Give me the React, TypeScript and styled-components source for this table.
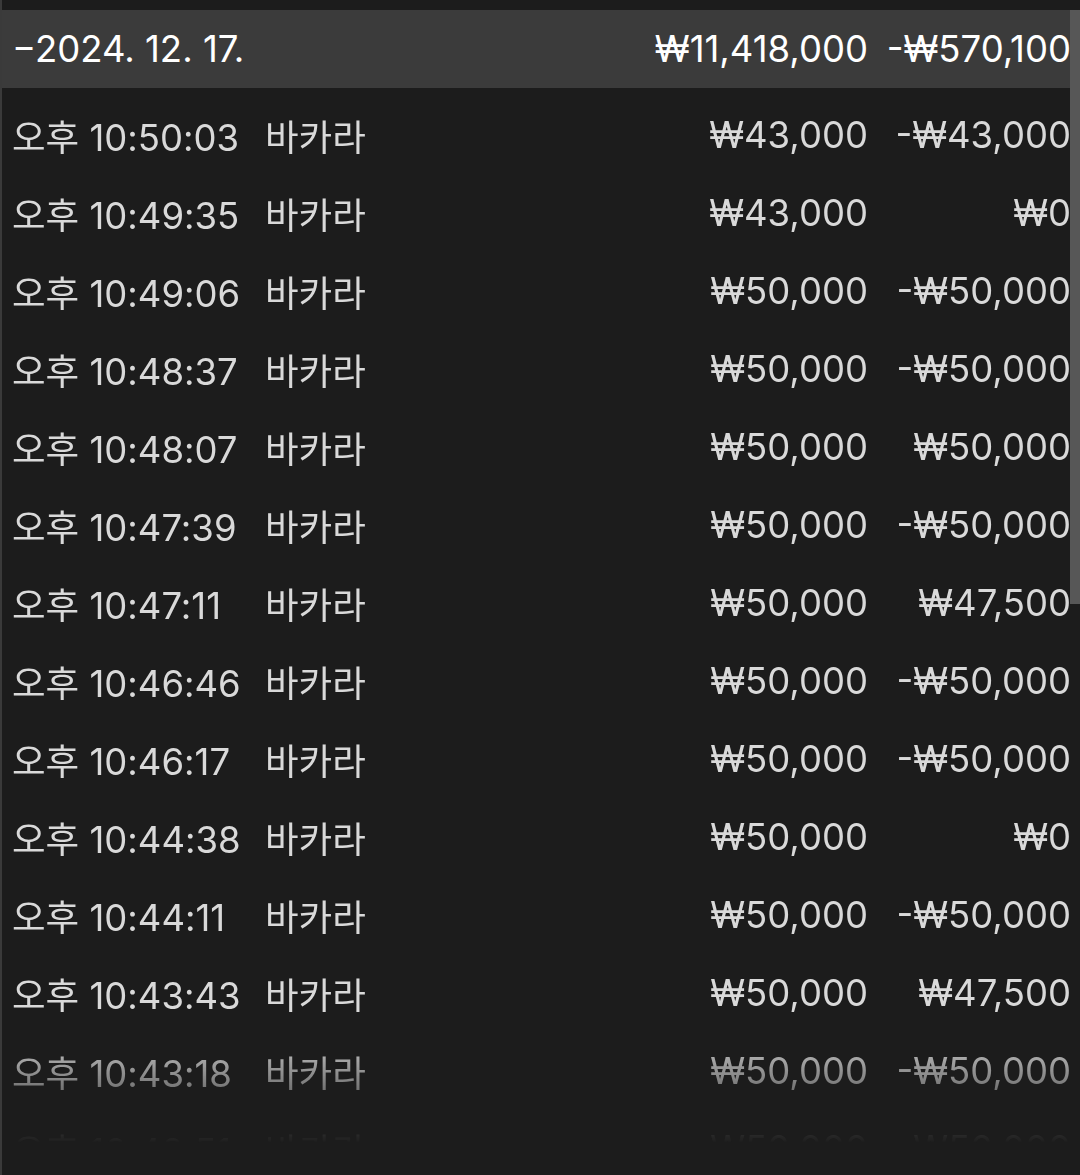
import React from "react";
import styled, { createGlobalStyle } from "styled-components";

interface Bet {
  time: string;
  game: string;
  stake: string;
  result: string;
}

const bets: Bet[] = [
  { time: "오후 10:50:03", game: "바카라", stake: "₩43,000", result: "-₩43,000" },
  { time: "오후 10:49:35", game: "바카라", stake: "₩43,000", result: "₩0" },
  { time: "오후 10:49:06", game: "바카라", stake: "₩50,000", result: "-₩50,000" },
  { time: "오후 10:48:37", game: "바카라", stake: "₩50,000", result: "-₩50,000" },
  { time: "오후 10:48:07", game: "바카라", stake: "₩50,000", result: "₩50,000" },
  { time: "오후 10:47:39", game: "바카라", stake: "₩50,000", result: "-₩50,000" },
  { time: "오후 10:47:11", game: "바카라", stake: "₩50,000", result: "₩47,500" },
  { time: "오후 10:46:46", game: "바카라", stake: "₩50,000", result: "-₩50,000" },
  { time: "오후 10:46:17", game: "바카라", stake: "₩50,000", result: "-₩50,000" },
  { time: "오후 10:44:38", game: "바카라", stake: "₩50,000", result: "₩0" },
  { time: "오후 10:44:11", game: "바카라", stake: "₩50,000", result: "-₩50,000" },
  { time: "오후 10:43:43", game: "바카라", stake: "₩50,000", result: "₩47,500" },
  { time: "오후 10:43:18", game: "바카라", stake: "₩50,000", result: "-₩50,000" },
  { time: "오후 10:42:51", game: "바카라", stake: "₩50,000", result: "-₩50,000" },
];

const GlobalStyle = createGlobalStyle`
  html, body {
    margin: 0;
    padding: 0;
    background: #1c1c1c;
  }
  body {
    font-family: Inter, "Noto Sans CJK KR", sans-serif;
  }
`;

const Page = styled.div`
  position: relative;
  height: 1175px;
  overflow: hidden;
  box-sizing: border-box;
  padding-top: 10px;
  background: #1c1c1c;
  border-left: 2px solid #3a3a3a;
  display: flex;
  flex-direction: column;
`;

const Grid = styled.div`
  display: grid;
  grid-template-columns: 253px 1fr auto 203px;
  align-items: center;
  flex-shrink: 0;
  height: 78px;
  padding: 0 9px 0 10px;
  font-size: 36.5px;
`;

const DayHeader = styled(Grid)`
  background: #3b3b3b;
  color: #ffffff;
`;

const Row = styled(Grid)`
  color: #d9d9d9;
`;

const List = styled.div`
  flex-shrink: 0;
  padding-top: 8px;
  -webkit-mask-image: linear-gradient(to bottom, #000 0, #000 940px, transparent 1055px);
  mask-image: linear-gradient(to bottom, #000 0, #000 940px, transparent 1055px);
`;

const DateLabel = styled.span`
  grid-column: 1 / 3;
`;

const Cell = styled.span<{ $right?: boolean }>`
  white-space: nowrap;
  text-align: ${(p) => (p.$right ? "right" : "left")};
`;

const ScrollThumb = styled.div`
  position: absolute;
  top: 10px;
  right: 0;
  width: 10px;
  height: 594px;
  background: #575757;
`;

export default function App() {
  return (
    <>
      <GlobalStyle />
      <Page>
        <DayHeader>
          <DateLabel>−2024. 12. 17.</DateLabel>
          <Cell $right>₩11,418,000</Cell>
          <Cell $right>-₩570,100</Cell>
        </DayHeader>
        <List>
          {bets.map((b, i) => (
            <Row key={i}>
              <Cell>{b.time}</Cell>
              <Cell>{b.game}</Cell>
              <Cell $right>{b.stake}</Cell>
              <Cell $right>{b.result}</Cell>
            </Row>
          ))}
        </List>
        <ScrollThumb />
      </Page>
    </>
  );
}
